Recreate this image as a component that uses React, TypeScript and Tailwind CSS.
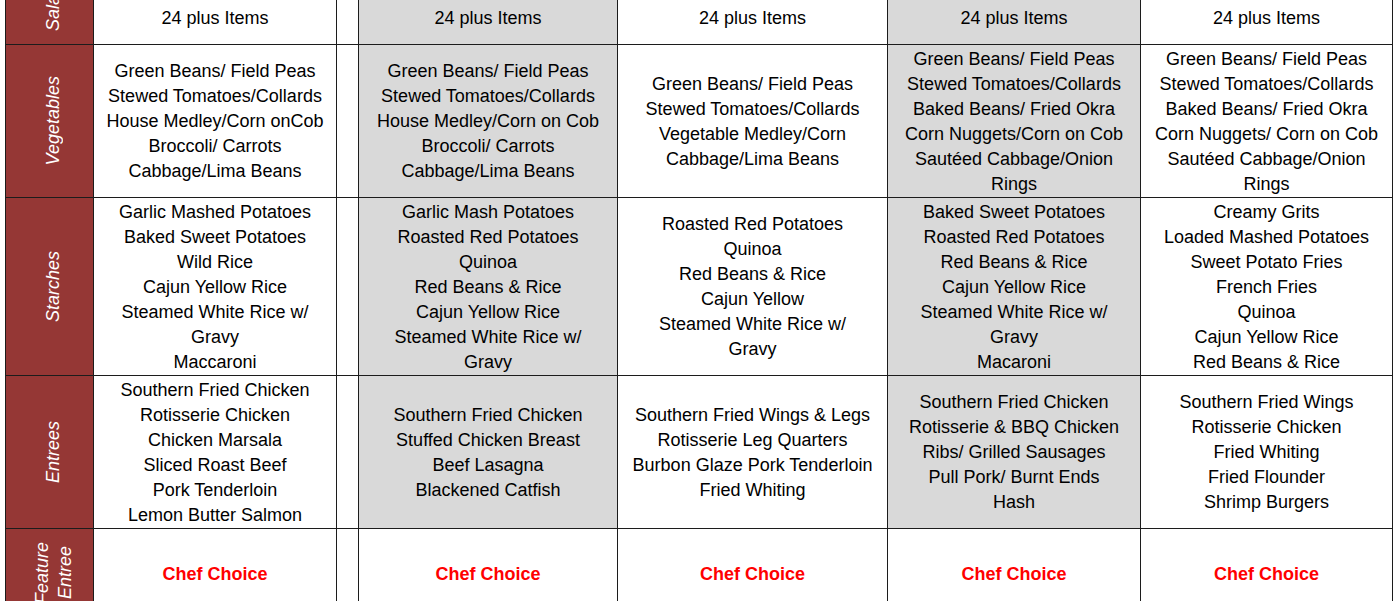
import { clsx } from "clsx";

type Day = {
  shaded: boolean;
  salad: string;
  vegetables: string[];
  starches: string[];
  entrees: string[];
};

const days: Day[] = [
  {
    shaded: false,
    salad: "24 plus Items",
    vegetables: [
      "Green Beans/ Field Peas",
      "Stewed Tomatoes/Collards",
      "House Medley/Corn onCob",
      "Broccoli/ Carrots",
      "Cabbage/Lima Beans",
    ],
    starches: [
      "Garlic Mashed Potatoes",
      "Baked Sweet Potatoes",
      "Wild Rice",
      "Cajun Yellow Rice",
      "Steamed White Rice w/",
      "Gravy",
      "Maccaroni",
    ],
    entrees: [
      "Southern Fried Chicken",
      "Rotisserie Chicken",
      "Chicken Marsala",
      "Sliced Roast Beef",
      "Pork Tenderloin",
      "Lemon Butter Salmon",
    ],
  },
  {
    shaded: true,
    salad: "24 plus Items",
    vegetables: [
      "Green Beans/ Field Peas",
      "Stewed Tomatoes/Collards",
      "House Medley/Corn on Cob",
      "Broccoli/ Carrots",
      "Cabbage/Lima Beans",
    ],
    starches: [
      "Garlic Mash Potatoes",
      "Roasted Red Potatoes",
      "Quinoa",
      "Red Beans & Rice",
      "Cajun Yellow Rice",
      "Steamed White Rice w/",
      "Gravy",
    ],
    entrees: [
      "Southern Fried Chicken",
      "Stuffed Chicken Breast",
      "Beef Lasagna",
      "Blackened Catfish",
    ],
  },
  {
    shaded: false,
    salad: "24 plus Items",
    vegetables: [
      "Green Beans/ Field Peas",
      "Stewed Tomatoes/Collards",
      "Vegetable Medley/Corn",
      "Cabbage/Lima Beans",
    ],
    starches: [
      "Roasted Red Potatoes",
      "Quinoa",
      "Red Beans & Rice",
      "Cajun Yellow",
      "Steamed White Rice w/",
      "Gravy",
    ],
    entrees: [
      "Southern Fried Wings & Legs",
      "Rotisserie Leg Quarters",
      "Burbon Glaze Pork Tenderloin",
      "Fried Whiting",
    ],
  },
  {
    shaded: true,
    salad: "24 plus Items",
    vegetables: [
      "Green Beans/ Field Peas",
      "Stewed Tomatoes/Collards",
      "Baked Beans/ Fried Okra",
      "Corn Nuggets/Corn on Cob",
      "Sautéed Cabbage/Onion",
      "Rings",
    ],
    starches: [
      "Baked Sweet Potatoes",
      "Roasted Red Potatoes",
      "Red Beans & Rice",
      "Cajun Yellow Rice",
      "Steamed White Rice w/",
      "Gravy",
      "Macaroni",
    ],
    entrees: [
      "Southern Fried Chicken",
      "Rotisserie & BBQ Chicken",
      "Ribs/ Grilled Sausages",
      "Pull Pork/ Burnt Ends",
      "Hash",
    ],
  },
  {
    shaded: false,
    salad: "24 plus Items",
    vegetables: [
      "Green Beans/ Field Peas",
      "Stewed Tomatoes/Collards",
      "Baked Beans/ Fried Okra",
      "Corn Nuggets/ Corn on Cob",
      "Sautéed Cabbage/Onion",
      "Rings",
    ],
    starches: [
      "Creamy Grits",
      "Loaded Mashed Potatoes",
      "Sweet Potato Fries",
      "French Fries",
      "Quinoa",
      "Cajun Yellow Rice",
      "Red Beans & Rice",
    ],
    entrees: [
      "Southern Fried Wings",
      "Rotisserie Chicken",
      "Fried Whiting",
      "Fried Flounder",
      "Shrimp Burgers",
    ],
  },
];

const Label = ({ lines, bottom }: { lines: string[]; bottom?: boolean }) => (
  <div
    className={clsx(
      "bg-[#953735] flex pl-[8px] text-white italic text-[18px] leading-[23px]",
      bottom ? "items-end justify-center pb-[13px]" : "items-center justify-center"
    )}
  >
    <div className="[writing-mode:vertical-rl] rotate-180 whitespace-nowrap text-center">
      {lines.map((l) => (
        <div key={l}>{l}</div>
      ))}
    </div>
  </div>
);

const Cell = ({ items, shaded }: { items: string[]; shaded: boolean }) => (
  <div
    className={clsx(
      "flex flex-col items-center justify-center pt-px text-center text-[18px] leading-[25px] text-black whitespace-nowrap",
      shaded ? "bg-[#d9d9d9]" : "bg-white"
    )}
  >
    {items.map((item, i) => (
      <div key={i}>{item}</div>
    ))}
  </div>
);

const Spacer = () => <div className="bg-white" />;

export default function App() {
  const rows: { label: string[]; bottom?: boolean; get: (d: Day) => string[] }[] = [
    { label: ["Salad Bar"], bottom: true, get: (d) => [d.salad] },
    { label: ["Vegetables"], get: (d) => d.vegetables },
    { label: ["Starches"], get: (d) => d.starches },
    { label: ["Entrees"], get: (d) => d.entrees },
  ];

  return (
    <div className="h-[601px] w-[1400px] overflow-hidden bg-white font-['Liberation_Sans',Arial,sans-serif]">
      <div className="ml-[5px] -mt-[9px] w-[1388px] grid grid-cols-[87px_242px_21px_258px_269px_252px_251px] grid-rows-[52px_152px_177px_152px_89px] gap-px p-px bg-[#1c1c1c]">
        {rows.map((row) => (
          <div key={row.label[0]} className="contents">
            <Label lines={row.label} bottom={row.bottom} />
            <Cell items={row.get(days[0])} shaded={days[0].shaded} />
            <Spacer />
            {days.slice(1).map((d, i) => (
              <Cell key={i} items={row.get(d)} shaded={d.shaded} />
            ))}
          </div>
        ))}
        <Label lines={["Feature", "Entree"]} />
        {[0, 1, 2, 3, 4, 5].map((i) =>
          i === 1 ? (
            <Spacer key={i} />
          ) : (
            <div
              key={i}
              className="bg-white flex items-center justify-center pt-px text-[18px] font-bold text-[#ff0000]"
            >
              Chef Choice
            </div>
          )
        )}
      </div>
    </div>
  );
}
